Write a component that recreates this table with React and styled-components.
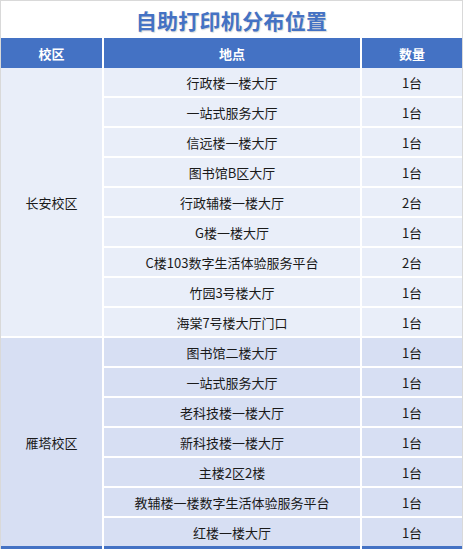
import styled, { createGlobalStyle } from "styled-components";

const GlobalStyle = createGlobalStyle`
  html, body {
    margin: 0;
    padding: 0;
    background: #fff;
    overflow: hidden;
  }
  body {
    font-family: "Noto Sans CJK SC", "Noto Sans", sans-serif;
  }
`;

const campuses = [
  {
    name: "长安校区",
    tone: "light",
    places: [
      ["行政楼一楼大厅", "1台"],
      ["一站式服务大厅", "1台"],
      ["信远楼一楼大厅", "1台"],
      ["图书馆B区大厅", "1台"],
      ["行政辅楼一楼大厅", "2台"],
      ["G楼一楼大厅", "1台"],
      ["C楼103数字生活体验服务平台", "2台"],
      ["竹园3号楼大厅", "1台"],
      ["海棠7号楼大厅门口", "1台"],
    ],
  },
  {
    name: "雁塔校区",
    tone: "dark",
    places: [
      ["图书馆二楼大厅", "1台"],
      ["一站式服务大厅", "1台"],
      ["老科技楼一楼大厅", "1台"],
      ["新科技楼一楼大厅", "1台"],
      ["主楼2区2楼", "1台"],
      ["教辅楼一楼数字生活体验服务平台", "1台"],
      ["红楼一楼大厅", "1台"],
    ],
  },
];

export default function App() {
  return (
    <>
      <GlobalStyle />
      <Frame>
        <Title>自助打印机分布位置</Title>
        <HeadRow>
          <HeadCell>校区</HeadCell>
          <HeadCell>地点</HeadCell>
          <HeadCell>数量</HeadCell>
        </HeadRow>
        <Body>
          {campuses.map((c) => (
            <Group key={c.name} $rows={c.places.length}>
              <Cell
                $tone={c.tone}
                style={{ gridRow: `1 / span ${c.places.length}` }}
              >
                {c.name}
              </Cell>
              {c.places.map(([place, count], i) => (
                <Row key={i}>
                  <Cell $tone={c.tone}>{place}</Cell>
                  <Cell $tone={c.tone}>{count}</Cell>
                </Row>
              ))}
            </Group>
          ))}
        </Body>
        <FootRow>
          <FootCell />
          <FootCell />
          <FootCell />
        </FootRow>
      </Frame>
    </>
  );
}

const Frame = styled.div`
  width: 463px;
  height: 549px;
  box-sizing: border-box;
  border: 1px solid #d9d9d9;
  border-bottom: none;
  overflow: hidden;
  background: #fff;
`;

const Title = styled.div`
  height: 37px;
  display: flex;
  align-items: center;
  justify-content: center;
  color: #4472c4;
  font-size: 21px;
  font-weight: 700;
  letter-spacing: 0.3px;
  text-shadow: 1px 1px 1px rgba(0, 0, 0, 0.15);
`;

const columns = "101px 256px 100px";

const HeadRow = styled.div`
  display: grid;
  grid-template-columns: ${columns};
  column-gap: 2px;
  height: 30px;
`;

const HeadCell = styled.div`
  background: #4472c4;
  color: #fff;
  font-size: 13px;
  font-weight: 700;
  display: flex;
  align-items: center;
  justify-content: center;
`;

const Body = styled.div`
  display: flex;
  flex-direction: column;
  gap: 2px;
`;

const Group = styled.div`
  display: grid;
  grid-template-columns: 101px 358px;
  grid-template-rows: repeat(${(p) => p.$rows}, 28px);
  column-gap: 2px;
  row-gap: 2px;
`;

const Row = styled.div`
  grid-column: 2;
  display: grid;
  grid-template-columns: 256px 100px;
  column-gap: 2px;
`;

const Cell = styled.div`
  background: ${(p) => (p.$tone === "dark" ? "#d7dff3" : "#e9eef9")};
  color: #1a1a1a;
  font-size: 13px;
  display: flex;
  align-items: center;
  justify-content: center;
`;

const FootRow = styled.div`
  display: grid;
  grid-template-columns: ${columns};
  column-gap: 2px;
  height: 30px;
`;

const FootCell = styled.div`
  background: #4472c4;
`;
